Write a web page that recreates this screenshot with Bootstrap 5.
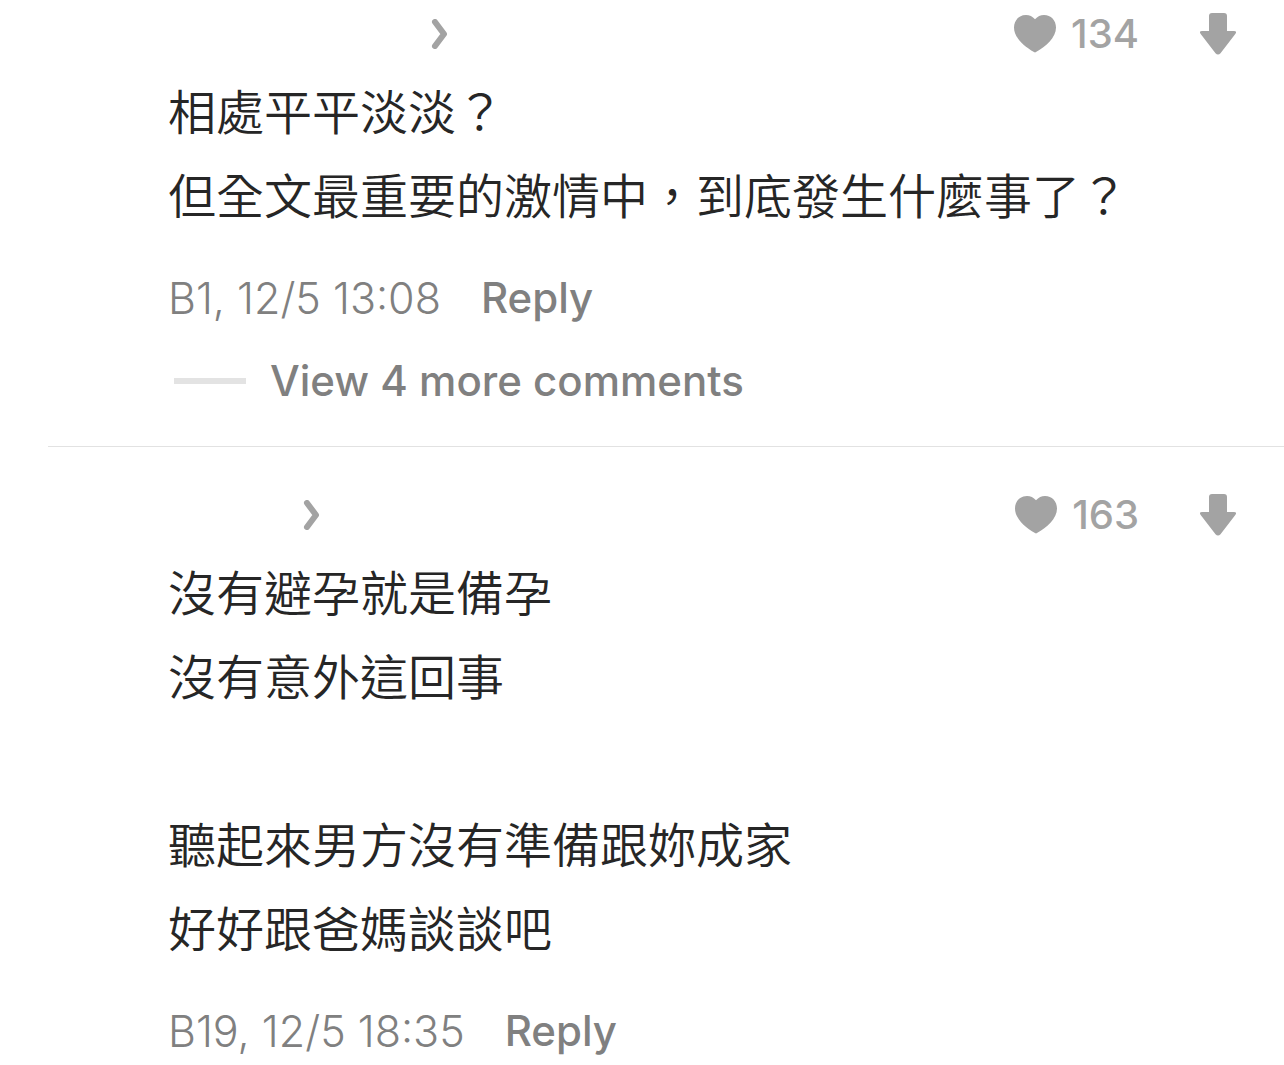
<!DOCTYPE html>
<html lang="zh-Hant">
<head>
<meta charset="utf-8">
<meta name="viewport" content="width=device-width, initial-scale=1">
<title>Comments</title>
<link href="https://cdn.jsdelivr.net/npm/bootstrap@5.3.0/dist/css/bootstrap.min.css" rel="stylesheet">
<style>
body { font-family: Inter, "Noto Sans CJK TC", sans-serif; color: #262626; background: #fff; overflow-x: hidden; }
.thread { padding-left: 48px; }
.comment { padding: 10px 48px 41px 120px; }
.comment + .comment { padding-top: 44px; border-top: 1px solid #e2e2e2; }
.comment-head { height: 48px; margin-bottom: 9px; color: #a3a3a3; }
.author { padding-left: 263px; }
.author-short { padding-left: 135px; }
.votes { gap: 61px; }
.plain { background: none; color: inherit; font: inherit; padding: 0; border: 0; }
.like { gap: 15px; font-size: 40px; line-height: 48px; font-weight: 500; }
.comment-text { font-family: "Noto Sans CJK TC DemiLight", "Noto Sans CJK TC", sans-serif; font-size: 48px; line-height: 84px; font-weight: 350; margin-bottom: 39px; }
.comment-meta { font-size: 43px; line-height: 48px; color: #808080; gap: 40px; font-weight: 300; }
.strong-label { font-size: 42px; line-height: 48px; font-weight: 500; }
.more { margin-top: 35px; gap: 24px; padding-left: 6px; color: #808080; }
.dash { width: 72px; height: 6px; background: #e3e3e3; }
</style>
<script src="https://cdn.jsdelivr.net/npm/bootstrap@5.3.0/dist/js/bootstrap.bundle.min.js"></script>
</head>
<body>
<main class="thread">
  <article class="comment">
    <header class="comment-head d-flex align-items-center justify-content-between">
      <a class="author d-flex" href="#" aria-label="Author profile"><svg width="18" height="30" viewBox="0 0 18 30" fill="none" stroke="#a3a3a3" stroke-width="6" stroke-linecap="round" stroke-linejoin="round"><path d="M4 3l9 12-9 12"/></svg></a>
      <div class="votes d-flex align-items-center">
        <button type="button" class="plain like d-flex align-items-center"><svg width="42" height="38" viewBox="0 0 42 38" fill="#a3a3a3" aria-hidden="true"><path d="M21 4.300C18.500 1.500 15.500 0 12 0 5 0 0 5.300 0 12.500 0 22.500 10 31.500 20 37.100Q21 37.700 22 37.100C32 31.500 42 22.500 42 12.500 42 5.300 37 0 30 0c-3.500 0-6.500 1.500-9 4.300z"/></svg><span>134</span></button>
        <button type="button" class="plain d-flex" aria-label="Dislike"><svg width="36" height="42" viewBox="0 0 36 42" fill="#a3a3a3"><path d="M12 0h12q3 0 3 3v15h7q3.500 0 1.300 3.100L20.500 40.200q-2.500 2.800-5 0L.7 21.100Q-1.500 18 2 18h7V3q0-3 3-3z"/></svg></button>
      </div>
    </header>
    <p class="comment-text">相處平平淡淡？<br>但全文最重要的激情中，到底發生什麼事了？</p>
    <footer class="comment-meta d-flex"><span>B1, 12/5 13:08</span><button type="button" class="plain strong-label">Reply</button></footer>
    <button type="button" class="plain more strong-label d-flex align-items-center"><span class="dash"></span><span>View 4 more comments</span></button>
  </article>
  <article class="comment">
    <header class="comment-head d-flex align-items-center justify-content-between">
      <a class="author-short d-flex" href="#" aria-label="Author profile"><svg width="18" height="30" viewBox="0 0 18 30" fill="none" stroke="#a3a3a3" stroke-width="6" stroke-linecap="round" stroke-linejoin="round"><path d="M4 3l9 12-9 12"/></svg></a>
      <div class="votes d-flex align-items-center">
        <button type="button" class="plain like d-flex align-items-center"><svg width="42" height="38" viewBox="0 0 42 38" fill="#a3a3a3" aria-hidden="true"><path d="M21 4.300C18.500 1.500 15.500 0 12 0 5 0 0 5.300 0 12.500 0 22.500 10 31.500 20 37.100Q21 37.700 22 37.100C32 31.500 42 22.500 42 12.500 42 5.300 37 0 30 0c-3.500 0-6.500 1.500-9 4.300z"/></svg><span>163</span></button>
        <button type="button" class="plain d-flex" aria-label="Dislike"><svg width="36" height="42" viewBox="0 0 36 42" fill="#a3a3a3"><path d="M12 0h12q3 0 3 3v15h7q3.500 0 1.300 3.100L20.500 40.200q-2.500 2.800-5 0L.7 21.100Q-1.500 18 2 18h7V3q0-3 3-3z"/></svg></button>
      </div>
    </header>
    <p class="comment-text">沒有避孕就是備孕<br>沒有意外這回事<br><br>聽起來男方沒有準備跟妳成家<br>好好跟爸媽談談吧</p>
    <footer class="comment-meta d-flex"><span>B19, 12/5 18:35</span><button type="button" class="plain strong-label">Reply</button></footer>
  </article>
</main>
</body>
</html>
